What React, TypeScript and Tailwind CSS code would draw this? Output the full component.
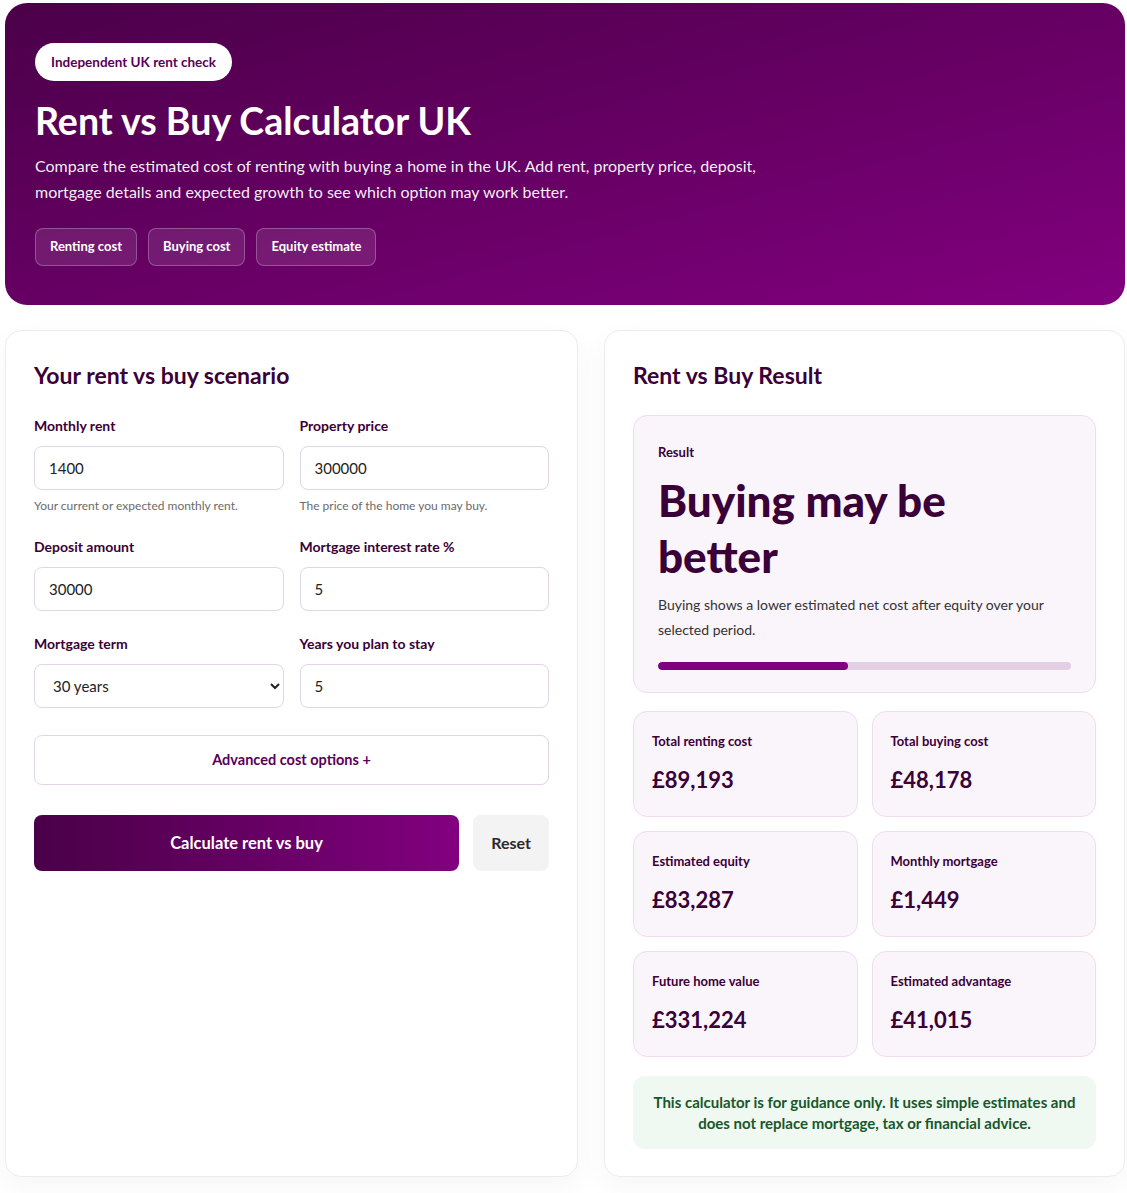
import { useState } from "react";

type Stat = {
  label: string;
  value: string;
};

const stats: Stat[] = [
  { label: "Total renting cost", value: "£89,193" },
  { label: "Total buying cost", value: "£48,178" },
  { label: "Estimated equity", value: "£83,287" },
  { label: "Monthly mortgage", value: "£1,449" },
  { label: "Future home value", value: "£331,224" },
  { label: "Estimated advantage", value: "£41,015" },
];

function Field({
  label,
  value,
  hint,
}: {
  label: string;
  value: string;
  hint?: string;
}) {
  return (
    <div className="flex flex-col">
      <label className="mb-[10px] text-[14px] font-bold leading-[20px] text-[#3a0038]">
        {label}
      </label>

      <input
        defaultValue={value}
        className="h-[44px] w-full rounded-[8px] border border-[#e2d3e6] bg-white px-[14px] text-[15px] text-[#222] outline-none"
      />

      {hint && (
        <p className="mt-[8px] text-[12px] leading-[16px] text-[#6b6b6b]">
          {hint}
        </p>
      )}
    </div>
  );
}

export default function App() {
  const [term, setTerm] = useState("30");

  return (
    <div
      className="min-h-screen bg-white pt-[3px] pr-[2px] pb-[14px] pl-[5px]"
      style={{ fontFamily: '"Segoe UI", Lato, "Noto Sans", sans-serif' }}
    >
      <header className="rounded-[22px] bg-gradient-to-br from-[#4b0049] to-[#82007f] px-[30px] pt-[40px] pb-[39px] text-white">
        <span className="inline-flex h-[38px] items-center rounded-full bg-white px-[16px] text-[13.5px] font-bold text-[#5a0058]">
          Independent UK rent check
        </span>

        <h1 className="mt-[18px] text-[37.5px] font-bold leading-[44px]">
          Rent vs Buy Calculator UK
        </h1>

        <p className="mt-[10px] max-w-[760px] text-[16px] leading-[26px] text-white/95">
          Compare the estimated cost of renting with buying a home in the UK.
          Add rent, property price, deposit, mortgage details and expected
          growth to see which option may work better.
        </p>

        <div className="mt-[23px] flex gap-[11px]">
          {["Renting cost", "Buying cost", "Equity estimate"].map((item) => (
            <span
              key={item}
              className="inline-flex h-[38px] items-center rounded-[8px] border border-white/25 bg-white/10 px-[14px] text-[13px] font-bold"
            >
              {item}
            </span>
          ))}
        </div>
      </header>

      <main className="mt-[25px] grid grid-cols-[573fr_521fr] items-start gap-[26px]">
        <section className="h-[847px] rounded-[16px] border border-[#ececec] bg-white p-[28px] shadow-[0_10px_30px_rgba(0,0,0,0.04)]">
          <h2 className="mt-[1px] text-[23px] font-bold leading-[30px] text-[#3a0038]">
            Your rent vs buy scenario
          </h2>

          <div className="mt-[26px] grid grid-cols-2 gap-x-[16px] gap-y-[23px]">
            <Field
              label="Monthly rent"
              value="1400"
              hint="Your current or expected monthly rent."
            />

            <Field
              label="Property price"
              value="300000"
              hint="The price of the home you may buy."
            />

            <Field label="Deposit amount" value="30000" />

            <Field label="Mortgage interest rate %" value="5" />

            <div className="flex flex-col">
              <label className="mb-[10px] text-[14px] font-bold leading-[20px] text-[#3a0038]">
                Mortgage term
              </label>

              <select
                value={term}
                onChange={(e) => setTerm(e.target.value)}
                className="h-[44px] w-full rounded-[8px] border border-[#e2d3e6] bg-white px-[14px] text-[15px] text-[#222] outline-none"
              >
                <option value="25">25 years</option>
                <option value="30">30 years</option>
                <option value="35">35 years</option>
              </select>
            </div>

            <Field label="Years you plan to stay" value="5" />
          </div>

          <button className="mt-[27px] h-[50px] w-full rounded-[8px] border border-[#e2d3e6] bg-white text-[14.5px] font-bold text-[#5a0058]">
            Advanced cost options +
          </button>

          <div className="mt-[30px] flex gap-[14px]">
            <button className="h-[56px] flex-1 rounded-[8px] bg-gradient-to-r from-[#4a0048] to-[#820080] text-[16.5px] font-bold text-white">
              Calculate rent vs buy
            </button>

            <button className="h-[56px] w-[76px] rounded-[8px] bg-[#f3f3f3] text-[16px] font-bold text-[#2a2a2a]">
              Reset
            </button>
          </div>
        </section>

        <section className="h-[847px] rounded-[16px] border border-[#ececec] bg-white p-[28px] shadow-[0_10px_30px_rgba(0,0,0,0.04)]">
          <h2 className="mt-[1px] text-[23px] font-bold leading-[30px] text-[#3a0038]">
            Rent vs Buy Result
          </h2>

          <div className="mt-[25px] rounded-[14px] border border-[#f0dcef] bg-[#faf4fb] px-[24px] pt-[27px] pb-[22px]">
            <p className="text-[13px] font-bold leading-[18px] text-[#3a0038]">
              Result
            </p>

            <h3 className="mt-[11px] text-[44px] font-black leading-[56px] text-[#3a0038]">
              Buying may be better
            </h3>

            <p className="mt-[8px] text-[14px] leading-[25px] text-[#333]">
              Buying shows a lower estimated net cost after equity over your
              selected period.
            </p>

            <div className="mt-[20px] h-[8px] w-full overflow-hidden rounded-full bg-[#e3cfe3]">
              <div className="h-full rounded-full bg-[#800080]" style={{ width: "46%" }} />
            </div>
          </div>

          <div className="mt-[18px] grid grid-cols-2 gap-[14px]">
            {stats.map((stat) => (
              <div
                key={stat.label}
                className="h-[106px] rounded-[14px] border border-[#f0dcef] bg-[#faf4fb] px-[18px] pt-[20px]"
              >
                <p className="text-[13px] font-bold leading-[18px] text-[#3a0038]">
                  {stat.label}
                </p>

                <p className="mt-[16px] text-[22px] font-bold leading-[28px] text-[#3a0038]">
                  {stat.value}
                </p>
              </div>
            ))}
          </div>

          <div className="mt-[19px] rounded-[12px] bg-[#eff8f1] px-[16px] pt-[16px] pb-[15px] text-center text-[15px] font-bold leading-[21px] text-[#17572a]">
            This calculator is for guidance only. It uses simple estimates and
            does not replace mortgage, tax or financial advice.
          </div>
        </section>
      </main>
    </div>
  );
}
